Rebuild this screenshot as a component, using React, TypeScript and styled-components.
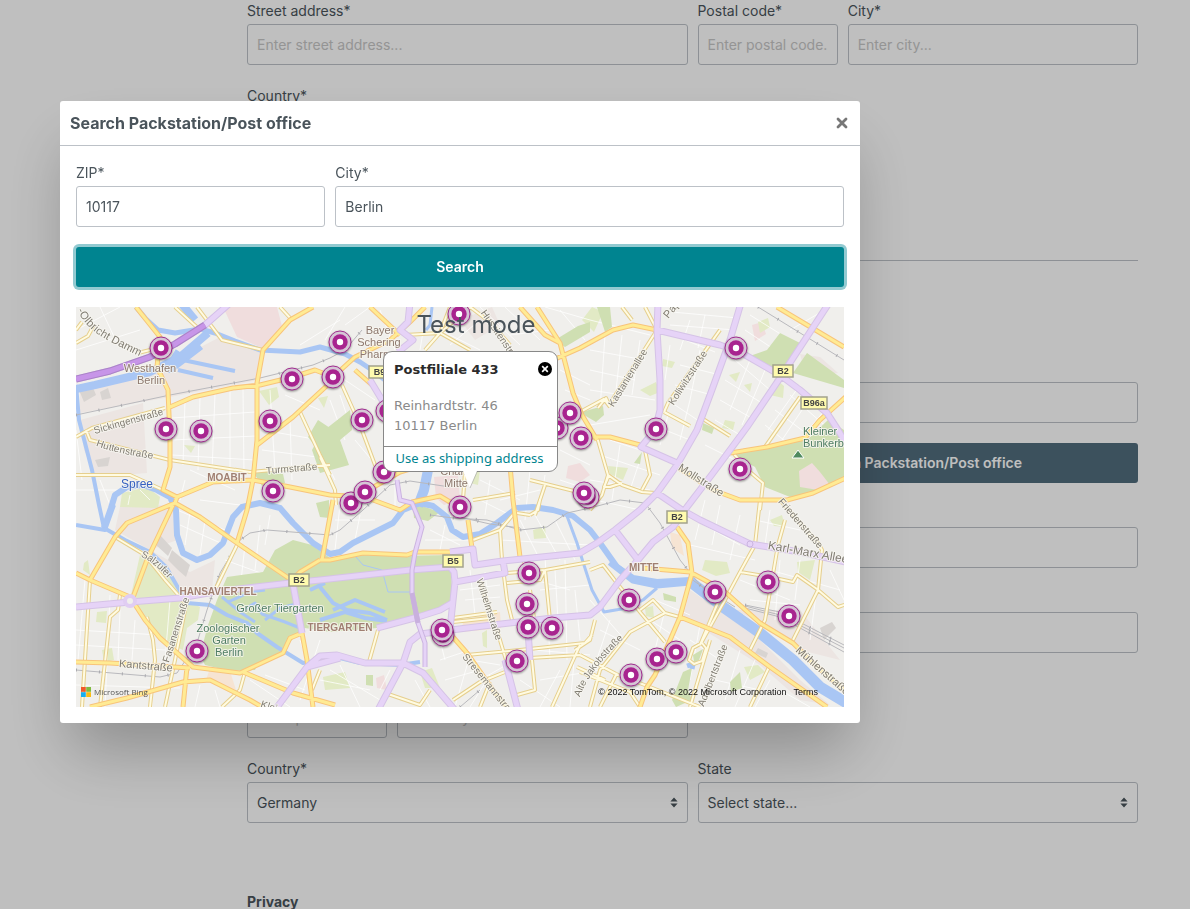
import React, { useId } from "react";
import styled, { createGlobalStyle, css } from "styled-components";

const GlobalStyle = createGlobalStyle`
  *, *::before, *::after { box-sizing: border-box; }
  body {
    margin: 0;
    height: 100vh;
    overflow: hidden;
    background: #fff;
    color: #4a545b;
    font: 14px/21px Inter, "Liberation Sans", sans-serif;
  }
`;

/* ---------- form parts ---------- */

const Page = styled.main`
  padding: 0 52px 0 247px;
`;

const Row = styled.div`
  display: grid;
  grid-template-columns: repeat(12, 1fr);
  gap: 10px;
  margin-bottom: 20px;
`;

const FieldBox = styled.div<{ $span: number }>`
  grid-column: span ${(p) => p.$span};
  display: flex;
  flex-direction: column;
  justify-content: flex-end;
  gap: 3px;
  min-width: 0;
  min-height: 65px;
`;

const Label = styled.label`
  line-height: 21px;
`;

const control = css`
  width: 100%;
  height: 41px;
  padding: 0 9px;
  border: 1px solid #bcc1c7;
  border-radius: 3px;
  background: #fff;
  color: #4a545b;
  font: inherit;
  outline: none;
`;

const Input = styled.input`
  ${control}
  &::placeholder { color: #c6c6c6; opacity: 1; }
`;

const SelectWrap = styled.div`
  position: relative;
`;

const Select = styled.select`
  ${control}
  display: block;
  appearance: none;
`;

const Caret = styled.svg`
  position: absolute;
  right: 10px;
  top: 15px;
  pointer-events: none;
`;

const SectionTitle = styled.h2`
  margin: 68px 0 12px;
  padding-bottom: 21px;
  border-bottom: 1px solid #bcc1c7;
  font-size: 14px;
  line-height: 21px;
  font-weight: 700;
`;

const Divider = styled.hr`
  margin: 110px 0 12px;
  border: 0;
  border-top: 1px solid #bcc1c7;
`;

const Button = styled.button<{ $tone: string; $focused?: boolean }>`
  display: block;
  width: 100%;
  height: 40px;
  padding: 0 0 2px;
  border: 0;
  border-radius: 3px;
  background: ${(p) => p.$tone};
  color: #fff;
  font: inherit;
  font-weight: 600;
  box-shadow: ${(p) => (p.$focused ? "0 0 0 3px rgba(38, 150, 163, 0.5)" : "none")};
`;

const HalfColumn = styled.div`
  grid-column: 7 / span 6;
`;

type FieldProps = { label: string; span: number; placeholder?: string; value?: string; bare?: boolean };

function Field({ label, span, placeholder, value, bare }: FieldProps) {
  const id = useId();
  return (
    <FieldBox $span={span}>
      {!bare && <Label htmlFor={id}>{label}</Label>}
      <Input id={id} aria-label={bare ? label : undefined} placeholder={placeholder} defaultValue={value} />
    </FieldBox>
  );
}

function SelectField({ label, span, value }: { label: string; span: number; value: string }) {
  const id = useId();
  return (
    <FieldBox $span={span}>
      <Label htmlFor={id}>{label}</Label>
      <SelectWrap>
        <Select id={id} defaultValue={value}>
          <option>{value}</option>
        </Select>
        <Caret width="8" height="11" viewBox="0 0 8 11" aria-hidden="true">
          <path d="M4 0.5 L7.6 4.5 H0.4 Z M4 10.5 L0.4 6.5 H7.6 Z" fill="#4a545b" />
        </Caret>
      </SelectWrap>
    </FieldBox>
  );
}

/* ---------- dialog parts ---------- */

const Backdrop = styled.div`
  position: fixed;
  inset: 0;
  padding: 101px 60px 0;
  background: rgba(0, 0, 0, 0.25);
`;

const Dialog = styled.section`
  max-width: 800px;
  border-radius: 3px;
  background: #fff;
  box-shadow: 0 36px 60px -10px rgba(0, 0, 0, 0.27);
`;

const DialogHeader = styled.header`
  display: flex;
  align-items: center;
  justify-content: space-between;
  height: 45px;
  padding: 0 10px;
  border-bottom: 1px solid #bcc1c7;
`;

const DialogTitle = styled.h1`
  margin: 0;
  font-size: 16px;
  line-height: 24px;
  font-weight: 700;
`;

const CloseButton = styled.button`
  display: flex;
  padding: 2px;
  border: 0;
  background: none;
  color: #777;
`;

const DialogBody = styled.div`
  padding: 16px;
`;

/* ---------- map parts ---------- */

const MapFrame = styled.div`
  position: relative;
  height: 400px;
  margin-top: 20px;
  overflow: hidden;
  background: #f0efec;
`;

const MapDrawing = styled.svg`
  display: block;
  width: 768px;
  height: 400px;
`;

const Pin = styled.button`
  position: absolute;
  width: 24px;
  height: 24px;
  margin: -12px 0 0 -12px;
  padding: 0;
  border: 0;
  background: none;
  filter: drop-shadow(0 1px 1px rgba(0, 0, 0, 0.45));
  svg { display: block; }
`;

const ModeNotice = styled.div`
  position: absolute;
  top: 0;
  left: 32px;
  right: 0;
  text-align: center;
  font-size: 24px;
  line-height: 36px;
`;

const Callout = styled.div`
  position: absolute;
  left: 307px;
  top: 44px;
  width: 175px;
  border: 1px solid #888;
  border-radius: 9px;
  background: #fff;
  font-family: "DejaVu Sans", sans-serif;
  font-size: 13px;
  line-height: 20px;
  color: #8a8a8a;
`;

const CalloutHead = styled.div`
  display: flex;
  align-items: flex-start;
  justify-content: space-between;
  padding: 8px 5px 16px 10px;
`;

const CalloutTitle = styled.strong`
  font-size: 13px;
  line-height: 20px;
  color: #2b2b2b;
`;

const CalloutClose = styled.button`
  display: flex;
  padding: 2px 0;
  border: 0;
  background: none;
`;

const Address = styled.address`
  padding: 0 10px 10px;
  font-style: normal;
`;

const CalloutAction = styled.a`
  display: block;
  border-top: 1px solid #888;
  padding: 1px 2px 3px 0;
  text-align: center;
  font-family: "Noto Sans", sans-serif;
  color: #008490;
  text-decoration: none;
`;

const Tail = styled.svg`
  position: absolute;
  left: 78px;
  top: 119px;
`;

const MapFooter = styled.div`
  position: absolute;
  left: 5px;
  right: 26px;
  bottom: 9px;
  display: flex;
  align-items: center;
  font: 9px/12px "Liberation Sans", sans-serif;
  color: #111;
`;

const Brand = styled.span`
  display: flex;
  align-items: center;
  gap: 3px;
  margin-right: auto;
  font: 8px/12px "Open Sans", sans-serif;
  color: #555;
`;

const Terms = styled.a`
  margin-left: 7px;
  color: inherit;
  text-decoration: none;
`;

/* Map drawing uses one coordinate space; its top left corner is the origin below. */
const ORIGIN = { x: 76, y: 307 };

const pins: [number, number][] = [
  [161, 348], [340, 342], [459, 314], [292, 379], [333, 377], [166, 429], [201, 431],
  [270, 421], [362, 420], [387, 411], [384, 472], [351, 503], [365, 492], [273, 491],
  [460, 507], [197, 651], [736, 348], [656, 429], [740, 469], [557, 428], [570, 413],
  [581, 438], [588, 497], [584, 493], [529, 573], [527, 604], [528, 627], [552, 628],
  [517, 661], [443, 635], [442, 630], [629, 600], [715, 592], [768, 582], [789, 616],
  [631, 675], [657, 659], [676, 652],
];

const parks = [
  "227,577 263,572 275,550 293,540 312,545 330,558 363,555 400,556 450,555 453,605 420,615 377,628 330,632 305,628 292,640 280,653 258,663 255,670 230,671 205,665 200,655 208,625 217,600",
  "322,432 350,410 352,430 340,440 349,465 320,473 312,450",
  "308,437 318,420 330,428 330,470 318,450",
  "252,470 283,474 285,483 262,486",
  "730,453 807,440 828,420 844,430 844,480 820,490 790,497 765,487 755,467",
  "747,357 767,350 780,333 800,343 780,377 763,365",
  "793,373 807,353 844,380 844,388",
  "597,307 610,307 612,327 605,332",
  "555,340 578,326 590,322 590,332 565,347",
  "582,412 603,406 604,415 596,422 584,415",
  "413,505 425,507 440,512 428,521 414,518",
  "740,672 742,688 731,692 730,682",
  "683,672 692,668 688,690 692,700 676,707 672,700",
  "663,593 676,597 676,602 664,600",
  "383,448 397,437 410,450 396,458",
  "703,423 714,428 712,434 702,430",
  "366,675 373,675 373,686 366,685",
  "316,503 329,500 329,518 320,517",
  "642,452 640,464 634,463",
  "693,655 703,649 699,660 694,663",
];

const lightParks = [
  "140,555 165,568 186,600 200,607 198,620 187,628 183,650 160,640 138,610 131,595",
  "122,493 147,487 160,497 158,508 120,507",
  "259,391 277,387 279,397 269,405",
  "184,445 195,446 191,453",
  "640,390 656,382 660,392 650,396",
  "663,359 675,362 672,368 662,366",
  "729,375 740,372 736,382",
  "744,385 752,383 750,392",
  "775,378 784,386 783,398 770,395",
  "782,467 794,462 797,474 783,475",
  "608,466 628,468 623,480 610,474",
  "705,560 727,562 730,573 716,576 702,570",
  "797,562 815,560 810,580 798,572",
  "770,520 782,515 785,527 774,526",
  "582,320 592,307 603,312 594,332",
  "533,530 545,526 546,538 534,539",
  "482,633 487,630 487,648 483,646",
  "323,677 345,672 350,688 325,690",
  "420,672 432,668 440,688 425,688",
  "318,398 328,396 324,408",
  "758,322 768,318 770,327 760,333",
  "84,563 88,560 90,575 83,570",
  "97,612 107,611 106,623 96,622",
  "470,467 480,470 478,485 466,482",
  "540,438 556,440 552,455 540,450",
  "744,667 758,665 765,672 750,680",
  "102,650 112,648 114,660 104,662",
  "725,420 735,422 733,430 722,428",
  "645,608 653,606 654,618 646,616",
];

const built = [
  { fill: "#ece5e2", points: "80,387 170,363 220,337 262,350 258,380 170,397 80,413" },
  { fill: "#ece5e2", points: "80,420 143,403 147,473 97,477 84,450" },
  { fill: "#ece5e2", points: "120,507 172,505 177,540 150,550 190,572 215,560 212,590 190,598 150,550 115,530" },
  { fill: "#ece5e2", points: "690,590 715,607 760,640 800,680 830,705 800,700 760,665 720,640 683,617" },
  { fill: "#ece5e2", points: "735,610 800,610 840,660 800,650 770,628" },
  { fill: "#f0dddd", points: "223,307 277,307 283,330 262,348 237,337" },
  { fill: "#f0dddd", points: "799,471 812,463 820,472 830,485 818,490 800,487" },
  { fill: "#f0dddd", points: "434,477 458,475 460,500 444,505 436,498" },
  { fill: "#f0dddd", points: "752,325 762,322 766,334 755,341" },
  { fill: "#f0dddd", points: "568,466 580,463 590,475 580,482 566,478" },
  { fill: "#f0dddd", points: "376,678 384,675 387,690 377,688" },
  { fill: "#f6e4d3", points: "463,620 500,612 501,628 462,632" },
  { fill: "#f6e4d3", points: "210,668 230,671 236,690 206,680" },
  { fill: "#f6e4d3", points: "670,532 680,535 684,556 672,548" },
  { fill: "#ece5e2", points: "800,354 820,357 838,373 820,375 803,365" },
  { fill: "#ece5e2", points: "460,320 492,307 500,325 475,340" },
  { fill: "#d8d4d1", points: "79,390 92,385 96,395 84,402" },
  { fill: "#d8d4d1", points: "100,392 108,388 111,398 102,400" },
  { fill: "#d8d4d1", points: "95,460 110,457 108,466 98,467" },
  { fill: "#d8d4d1", points: "160,535 172,548 168,556 156,545" },
  { fill: "#d8d4d1", points: "172,550 190,565 186,577 178,570 168,560" },
  { fill: "#d8d4d1", points: "758,648 768,653 766,658 755,653" },
  { fill: "#d8d4d1", points: "820,628 832,622 836,628 824,640" },
];

const water: { d: string; w: number }[] = [
  { d: "M136 307 146 319 158 330 175 333 200 329 215 333 235 341 260 350 300 352 320 347 345 354 360 362 375 372 395 388", w: 5 },
  { d: "M76 389 95 385 150 372 180 357 208 333", w: 8 },
  { d: "M180 352 170 368 200 345", w: 10 },
  { d: "M183 360 235 371 M178 370 213 378", w: 4 },
  { d: "M181 303 195 320", w: 8 },
  { d: "M76 385 79 420 92 470 99 505 104 528 M76 525 105 530 114 505", w: 4 },
  { d: "M104 528 111 508 115 495 127 487 143 485 157 490 170 497 176 510 177 535 183 553 197 560 210 555 223 543 233 517 242 507 260 503 280 508 293 523 313 543 330 554 340 552 353 543 373 533 393 523 403 510 420 503 433 506 447 517 452 530 463 537 480 534 497 523 517 508 533 507 553 510 573 516 590 530 600 543 617 567 633 578 657 582 690 580 705 592", w: 6 },
  { d: "M104 528 125 540 150 552 166 567 187 603 210 605 227 615 247 623 257 633 277 647 303 663 340 658 360 663 400 665 420 662", w: 4 },
  { d: "M428 470 424 490 418 506", w: 10 },
  { d: "M432 307 430 325 426 330", w: 3 },
  { d: "M610 562 633 580 657 585 690 582", w: 7 },
  { d: "M688 580 723 607 760 633 793 660 820 687 850 705", w: 11 },
  { d: "M567 516 577 543 583 562 592 590 604 612 627 608 643 600 657 588", w: 3 },
  { d: "M222 597 240 612 255 603 262 614 285 622 300 628 M228 602 250 592 265 590 M240 612 255 622 M265 620 280 608 296 604", w: 3 },
  { d: "M320 587 333 603 347 610 370 613 387 620 M333 610 355 600 385 612 M320 620 345 612 365 618 387 621 M310 590 325 583", w: 4 },
  { d: "M356 557 363 565 382 570 388 592 412 592", w: 1 },
  { d: "M687 666 693 664 692 669", w: 5 },
  { d: "M385 458 397 450", w: 2 },
];

const localStreets = [
  "M76 330 120 307 M100 307 118 345 M76 350 140 330 M345 307 325 340 M300 345 340 320",
  "M185 400 183 465 M200 397 198 470 M215 394 212 472 M230 391 230 475 M243 388 244 476 M172 418 255 412 M172 440 256 436 M172 455 255 460",
  "M270 390 275 470 M290 420 292 480 M262 430 320 440 M262 450 325 458 M300 410 335 480 M285 395 320 410",
  "M590 320 650 335 M590 350 645 360 M590 370 635 380 M605 335 600 410 M622 335 615 400 M640 340 632 395 M590 390 655 400 M590 425 650 415",
  "M670 345 665 380 M685 340 715 352 M680 365 720 375 M675 385 712 395 M700 350 690 400 M675 405 705 425 M690 400 680 440 M665 430 690 440 M668 415 660 445",
  "M725 380 765 405 M720 400 755 420 M735 360 770 390 M715 420 740 435 M705 445 735 460 M750 360 730 410 M765 370 742 425",
  "M790 395 830 430 M775 410 815 440 M765 425 790 445 M800 385 768 430 M812 395 782 440 M825 410 798 442 M800 320 844 345 M790 330 830 307",
  "M690 320 680 350 M705 315 698 348 M670 325 735 330 M672 312 738 318 M750 315 790 340 M745 330 775 350",
  "M610 440 655 455 M600 455 660 475 M620 445 612 500 M640 460 630 490 M590 480 650 490 M595 500 640 510",
  "M695 520 740 545 M705 500 695 540 M720 505 712 545 M690 545 755 560 M740 515 730 560 M770 510 765 545 M755 520 800 530",
  "M780 560 775 620 M740 580 790 600 M800 560 795 600 M820 565 810 640 M750 600 800 605 M770 570 840 590 M830 570 844 600",
  "M590 600 625 640 M600 630 640 650 M610 620 590 680 M590 660 640 690 M655 600 690 615 M650 620 680 640 M665 610 655 650",
  "M690 640 720 660 M700 625 690 680 M740 650 725 700 M755 660 735 707 M715 680 760 690 M770 680 755 707 M780 690 810 707",
  "M460 580 500 575 M460 590 500 585 M470 570 475 615 M485 572 490 620 M465 600 500 597 M535 580 570 590 M555 570 558 620 M540 590 590 585",
  "M545 555 550 660 M565 560 567 660 M575 590 580 640 M535 650 590 655 M540 680 600 670 M470 660 500 665 M480 680 515 660 M575 650 570 707",
  "M440 660 470 650 M445 680 480 670 M470 655 455 707 M490 675 470 707 M520 680 560 707 M560 670 540 707 M330 670 380 700 M340 665 360 707",
  "M320 680 370 690 M390 670 380 690 M415 680 430 707 M440 640 445 660 M520 520 540 560 M535 515 560 560 M555 520 575 560 M500 540 590 545",
  "M85 580 78 660 M110 595 105 707 M76 630 160 635 M76 645 165 650 M135 620 132 660 M155 645 152 707 M76 685 180 688 M120 610 118 660",
  "M170 600 165 660 M215 690 220 707 M200 685 195 707 M250 680 290 707 M265 675 305 690 M300 640 310 670 M320 640 300 700",
  "M177 510 225 530 M190 512 185 545 M205 520 200 555 M180 525 225 545 M245 545 240 590 M260 525 255 570 M225 560 280 580 M270 515 265 545",
  "M76 430 82 480 M100 480 110 505 M76 490 120 490 M130 495 128 505 M140 490 150 500 M185 480 180 500 M190 470 235 490 M200 500 240 505",
  "M345 380 375 400 M340 395 350 425 M330 400 345 440 M355 440 380 470 M395 480 395 510 M335 520 375 520 M340 505 335 550 M360 515 355 540",
  "M560 310 585 340 M545 307 590 320 M560 370 590 385 M565 390 590 400 M560 450 590 465 M480 480 520 500 M530 470 525 520 M545 475 540 510",
  "M560 480 590 490 M490 480 485 515 M500 500 540 490 M480 500 510 515 M430 530 460 545 M425 540 470 540 M445 525 440 550",
  "M380 310 395 350 M345 325 370 307 M425 320 420 350 M440 330 480 350 M450 345 480 320 M480 307 520 345 M505 307 540 340 M510 335 550 330",
];

const minorRoads = [
  "M76 343 88 336 94 325", "M138 353 150 350", "M197 307 222 340 263 350", "M280 307 292 320",
  "M76 437 92 428 165 408", "M86 430 90 440 170 460 250 472 330 465", "M76 475 130 475 163 490",
  "M300 412 320 455 330 475", "M90 580 82 707", "M120 595 118 610 110 617 100 707", "M147 617 153 640 155 660 150 707",
  "M187 600 175 660 165 707", "M76 330 82 322", "M115 537 145 555 165 580 187 605", "M237 545 215 590",
  "M440 333 425 350", "M405 335 440 333 470 307", "M440 333 470 350", "M470 307 490 322 510 345", "M440 333 450 307",
  "M342 385 360 425 375 465 385 480", "M320 457 335 490 336 505", "M645 307 657 330", "M598 408 606 398 609 405 657 330",
  "M580 412 604 399 610 407", "M664 412 668 403 720 330", "M664 412 690 426", "M703 419 730 436",
  "M765 447 800 397", "M597 437 608 475 622 485 642 492 655 493", "M608 475 602 495 590 510", "M645 450 650 475 642 490",
  "M609 475 604 487 610 487 622 483", "M733 453 750 472 763 483 760 510", "M760 500 755 545 740 572 725 600 700 645",
  "M780 500 818 543 822 550 818 590 793 640", "M785 520 778 545 772 580 765 620 750 650", "M740 572 770 577 793 582 797 575 817 589 838 607 850 603",
  "M590 570 603 565 620 587 640 612 665 642", "M640 610 653 600 665 613 683 618", "M665 613 630 632 600 670 590 707",
  "M580 655 618 675 650 687 700 707", "M580 672 630 692 640 707", "M617 673 600 707", "M595 620 590 640 575 650",
  "M473 540 500 530 517 510", "M500 530 502 560 507 600 512 620", "M478 575 500 640 506 660", "M507 573 545 570 590 562",
  "M507 583 540 580 545 570", "M545 570 550 620", "M530 590 535 625", "M467 655 520 650 585 643 592 635",
  "M530 658 580 655", "M453 618 497 612", "M453 622 490 618", "M532 660 535 690 517 695", "M580 645 552 707",
  "M453 700 480 682 505 672", "M490 682 480 707", "M378 630 369 662", "M388 694 420 705 430 690",
  "M523 560 530 575", "M530 515 538 510 540 500", "M530 515 517 513", "M465 472 463 500", "M473 500 515 493",
  "M530 480 590 495", "M545 485 535 515", "M245 672 240 690 222 707", "M320 670 312 690", "M577 667 605 680",
  "M175 307 200 330", "M770 665 750 707", "M693 648 702 643 706 648 702 661 694 664 689 660 Z",
  "M719 600 700 645", "M710 640 690 707", "M622 307 632 320",
];

const mainRoads = [
  "M136 307 160 337 157 367 168 390 170 440 170 467 163 490 177 497",
  "M313 307 290 320 263 350 257 383 257 440 253 480 247 510 237 543",
  "M170 407 193 397 233 388 260 385 293 377 315 370 333 377", "M333 377 355 357 390 340 410 322 425 307",
  "M257 445 293 417 333 380", "M253 480 213 482 177 497 175 503 127 523 115 537 90 580", "M175 503 200 517 237 543 287 577 300 585",
  "M173 505 147 560 132 600", "M253 480 290 487 330 495 365 497 400 510 412 502 440 496 455 505",
  "M76 573 90 580 130 597 145 620 160 638 193 667 240 673 283 653 290 638 302 633",
  "M320 560 300 572 290 582", "M243 672 293 693 335 705", "M76 662 110 663 190 668",
  "M90 707 127 698 183 682 210 680 250 700 262 707", "M187 667 183 707", "M302 633 307 660 313 707",
  "M320 560 330 560 363 553 407 555 415 552 450 552", "M322 560 333 500", "M365 492 400 472 440 460", "M468 520 472 548",
  "M510 465 513 500 520 557", "M453 637 467 653 493 690 507 707", "M537 307 560 343 573 393 582 415 597 440",
  "M520 307 545 335 560 343", "M582 437 610 437 640 445", "M553 360 580 348 613 330 633 325 657 330",
  "M777 307 844 347", "M730 453 767 447 805 438 820 420 850 393", "M677 467 713 490 740 500 787 500 813 493 850 476",
  "M677 527 688 543 692 573 680 617 655 675 647 687 640 707", "M643 568 690 572 723 590 760 623 793 643 813 663 850 695",
  "M680 617 730 637 770 667 827 707", "M370 307 400 335", "M355 370 372 385",
];

const trunkRoads = [
  "M76 607 130 602 180 598 220 591 290 583 320 580 410 570 450 567 454 572 455 582 452 610 450 630",
  "M455 582 505 573 503 561", "M450 552 473 549 475 565 503 561 580 553 597 543 615 530 640 510 657 493 677 465 697 430 713 387 730 340 741 303",
  "M658 303 657 330 660 380 660 410 655 430 641 447 677 463", "M657 330 720 345 740 352 780 375 800 390 827 413 838 430 850 450",
  "M829 303 780 378 747 427 713 473 687 507 673 527 653 542 638 560 620 580 600 607 590 615 553 618 467 628 420 634 410 642 403 663 378 710",
  "M657 493 682 510 700 520 750 544 800 552 850 563", "M615 530 638 560", "M452 603 440 610 418 617 377 628",
  "M293 584 302 633", "M275 710 307 667 320 656 337 655 365 663 403 663 423 673 455 710", "M307 667 340 658",
  "M528 630 530 660", "M505 660 518 710", "M410 303 408 322 400 330 413 340 398 352", "M370 380 385 405 400 440",
];

const tunnels = ["M397 480 400 500 412 503 422 527 415 553 412 570 412 593 418 623 425 643 425 667"];

const rails = [
  "M76 415 170 395 260 378 313 365 330 358 345 350 362 330",
  "M76 670 160 677 177 673 197 643 207 610 220 573 240 540 250 533 267 530 330 535 340 530 363 510 390 485 410 481 450 487",
  "M430 515 453 518 487 520 520 530 547 527 567 513 590 508 620 500 645 503 660 523 680 560 700 585 735 607",
  "M455 516 490 524 520 528", "M758 307 844 360", "M745 605 780 612 844 645", "M745 608 780 617 844 652", "M745 606 780 615 844 648", "M690 578 720 600",
  "M460 707 480 690",
];

type Place = { t: string; x: number; y: number; c?: string; bold?: boolean; s?: number; start?: boolean };
const BROWN = "#8d786e";
const GREEN = "#4f7d63";
const places: Place[] = [
  { t: "Westhafen", x: 150, y: 372, c: BROWN }, { t: "Berlin", x: 151, y: 384, c: BROWN },
  { t: "Bayer", x: 380, y: 334, c: BROWN }, { t: "Schering", x: 379, y: 346, c: BROWN }, { t: "Pharma", x: 379, y: 358, c: BROWN },
  { t: "Charité", x: 458, y: 475, c: BROWN }, { t: "Mitte", x: 456, y: 487, c: BROWN },
  { t: "MOABIT", x: 227, y: 481, c: "#a07f72", bold: true, s: 10 }, { t: "MITTE", x: 644, y: 571, c: "#a07f72", bold: true, s: 10 },
  { t: "HANSAVIERTEL", x: 218, y: 595, c: "#a07f72", bold: true, s: 10 }, { t: "TIERGARTEN", x: 340, y: 631, c: "#a07f72", bold: true, s: 10 },
  { t: "Spree", x: 137, y: 488, c: "#3560c0", s: 12 },
  { t: "Großer Tiergarten", x: 280, y: 612, c: GREEN }, { t: "Zoologischer", x: 228, y: 632, c: GREEN },
  { t: "Garten", x: 229, y: 644, c: GREEN }, { t: "Berlin", x: 229, y: 656, c: GREEN },
  { t: "Kleiner", x: 803, y: 435, c: GREEN, start: true }, { t: "Bunkerberg", x: 803, y: 447, c: GREEN, start: true },
];

const streetNames: { t: string; d: string; s?: number }[] = [
  { t: "-Olbricht Damm", d: "M80 309 Q88 326 108 337 T160 362", s: 11 },
  { t: "Sickingenstraße", d: "M94 431 L180 407" },
  { t: "Huttenstraße", d: "M97 443 Q120 452 175 459" },
  { t: "Turmstraße", d: "M266 471 L340 465" },
  { t: "Hussitenstraße", d: "M483 311 L530 380" },
  { t: "Kastanienallee", d: "M611 406 L658 329" },
  { t: "Pappelallee", d: "M666 317 L700 275", s: 11 },
  { t: "Kollwitzstraße", d: "M671 404 L719 330" },
  { t: "Mollstraße", d: "M679 467 L760 518", s: 11 },
  { t: "Friedenstraße", d: "M780 500 L840 569" },
  { t: "Karl-Marx Allee", d: "M768 546 L880 566", s: 12 },
  { t: "Salzufer", d: "M142 554 Q158 560 180 588" },
  { t: "Fasanenstraße", d: "M166 662 L189 590" },
  { t: "Kantstraße", d: "M119 664 L200 671", s: 11 },
  { t: "Wilhelmstraße", d: "M479 579 L507 665" },
  { t: "Stresemannstraße", d: "M464 655 L532 738" },
  { t: "Alte Jakobstraße", d: "M577 696 Q588 665 635 624" },
  { t: "Adalbertstraße", d: "M701 706 L733 625" },
  { t: "Mühlenstraße", d: "M797 649 L867 710", s: 11 },
  { t: "Kleiststraße", d: "M261 704 L310 720" },
];

const shields: [string, number, number][] = [
  ["B2", 783, 371], ["B96a", 814, 403], ["B2", 677, 517], ["B5", 453, 561], ["B2", 299, 580], ["B96", 382, 372],
];

function Roads({ lines, width, fill, edge, edgeWidth = 1 }: { lines: string[]; width: number; fill: string; edge: string; edgeWidth?: number }) {
  const d = lines.join(" ");
  return (
    <g fill="none" strokeLinejoin="round">
      <path d={d} stroke={edge} strokeWidth={width + edgeWidth * 2} />
      <path d={d} stroke={fill} strokeWidth={width} />
    </g>
  );
}

function CityMap() {
  return (
    <MapDrawing viewBox={`${ORIGIN.x} ${ORIGIN.y} 768 400`} role="img" aria-label="Map of Berlin">
      {built.map((b) => <polygon key={b.points} points={b.points} fill={b.fill} />)}
      {lightParks.map((p) => <polygon key={p} points={p} fill="#e2eac5" />)}
      <path d={localStreets.join(" ")} stroke="#fff" strokeOpacity="0.75" fill="none" />
      {parks.map((p) => <polygon key={p} points={p} fill="#cfdfb2" />)}
      <polygon points="799,471 812,463 820,472 830,485 818,490 800,487" fill="#f0dddd" />
      <g fill="none" stroke="#a9c6f4" strokeLinejoin="round">
        {water.map((w) => <path key={w.d} d={w.d} strokeWidth={w.w} />)}
      </g>
      <path d={rails.join(" ")} fill="none" stroke="#b9b9bd" />
      <path d={rails.join(" ")} fill="none" stroke="#a9a9ae" strokeWidth="3" strokeDasharray="1 22" />
      <Roads lines={minorRoads} width={2} fill="#fffbe2" edge="#e6cf8e" />
      <Roads lines={mainRoads} width={3} fill="#ffeb94" edge="#f8c47a" />
      <Roads lines={["M76 379 110 371 150 357 175 344 205 325 230 303"]} width={5} fill="#e6d3f7" edge="#d3bfe8" />
      <Roads lines={["M76 379 110 371 150 357 175 344 205 325"]} width={5} fill="#c795e8" edge="#ab83c8" />
      <Roads lines={trunkRoads} width={5} fill="#e6d3f7" edge="#d5c3e6" />
      <Roads lines={tunnels} width={3} fill="#e6d3f7" edge="#cbb4e0" />
      <path d="M412 593 418 623" stroke="#c9b0de" strokeWidth="5" />
      <circle cx="130" cy="601" r="5" fill="#f0efec" stroke="#e0cdf2" strokeWidth="4" />
      <circle cx="750" cy="544" r="3" fill="#e6d3f7" stroke="#cbb4e0" />
      <g fontFamily="Liberation Sans, sans-serif" paintOrder="stroke" stroke="#f7f6f0" strokeOpacity="0.85" strokeWidth="2" strokeLinejoin="round">
        {streetNames.map((s, i) => (
          <g key={s.t}>
            <path id={`street-${i}`} d={s.d} fill="none" stroke="none" />
            <text fontSize={s.s ?? 10} fill="#807c72" dy="3">
              <textPath href={`#street-${i}`}>{s.t}</textPath>
            </text>
          </g>
        ))}
        {places.map((p) => (
          <text key={p.t + p.y} x={p.x} y={p.y} fontSize={p.s ?? 11} fontWeight={p.bold ? 700 : 400} fill={p.c} textAnchor={p.start ? "start" : "middle"}>
            {p.t}
          </text>
        ))}
      </g>
      {shields.map(([t, x, y]) => {
        const w = t.length > 2 ? 26 : 20;
        return (
          <g key={t + x}>
            <rect x={x - w / 2} y={y - 6} width={w} height="12" fill="#fffbae" stroke="#a3a38c" strokeWidth="1.5" />
            <text x={x} y={y + 3} fontFamily="Liberation Sans, sans-serif" fontSize="9" fontWeight="700" fill="#444" textAnchor="middle">{t}</text>
          </g>
        );
      })}
      <path d="M798 450 804 458 H792 Z" fill="#4f8a5f" stroke="#fff" />
    </MapDrawing>
  );
}

function BranchMap() {
  return (
    <MapFrame>
      <CityMap />
      {pins.map(([x, y]) => (
        <Pin key={`${x}-${y}`} aria-label="Branch" style={{ left: x - ORIGIN.x, top: y - ORIGIN.y }}>
          <svg width="24" height="24" viewBox="0 0 24 24">
            <circle cx="12" cy="12" r="11" fill="#d6c6d6" stroke="#a02c8f" />
            <circle cx="12" cy="12" r="7.7" fill="#a8248f" />
            <circle cx="12" cy="12" r="3.2" fill="#fff" />
          </svg>
        </Pin>
      ))}
      <ModeNotice>Test mode</ModeNotice>
      <Callout>
        <CalloutHead>
          <CalloutTitle>Postfiliale 433</CalloutTitle>
          <CalloutClose aria-label="Close details">
            <svg width="14" height="14" viewBox="0 0 14 14">
              <circle cx="7" cy="7" r="7" fill="#000" />
              <path d="M4.2 4.2 9.8 9.8 M9.8 4.2 4.2 9.8" stroke="#fff" strokeWidth="1.7" />
            </svg>
          </CalloutClose>
        </CalloutHead>
        <Address>
          Reinhardtstr. 46
          <br />
          10117 Berlin
        </Address>
        <CalloutAction href="#use">Use as shipping address</CalloutAction>
        <Tail width="16" height="18" viewBox="0 0 16 18" aria-hidden="true">
          <path d="M1 0 H15 L8 17 Z" fill="#fff" />
          <path d="M15 1 L8 17" stroke="#aaa" strokeWidth="0.7" />
        </Tail>
      </Callout>
      <MapFooter>
        <Brand>
          <svg width="10" height="10" viewBox="0 0 10 10" aria-hidden="true">
            <path d="M0 0h4.8v4.8H0z" fill="#f1592a" />
            <path d="M5.2 0H10v4.8H5.2z" fill="#80bb41" />
            <path d="M0 5.2h4.8V10H0z" fill="#19aef0" />
            <path d="M5.2 5.2H10V10H5.2z" fill="#fbbc13" />
          </svg>
          Microsoft Bing
        </Brand>
        <span>© 2022 TomTom, © 2022 Microsoft Corporation</span>
        <Terms href="#terms">Terms</Terms>
      </MapFooter>
    </MapFrame>
  );
}

export default function App() {
  return (
    <>
      <GlobalStyle />
      <Page>
        <Row>
          <Field label="Street address*" span={6} placeholder="Enter street address..." />
          <Field label="Postal code*" span={2} placeholder="Enter postal code..." />
          <Field label="City*" span={4} placeholder="Enter city..." />
        </Row>
        <Row>
          <SelectField label="Country*" span={6} value="Germany" />
        </Row>
        <Divider />
        <Row>
          <Field label="Title" span={3} bare />
        </Row>
        <Row>
          <Field label="First name" span={6} bare />
          <Field label="Last name" span={6} bare />
        </Row>
        <Row>
          <HalfColumn>
            <Button type="button" $tone="#516c7d">Search Packstation/Post office</Button>
          </HalfColumn>
        </Row>
        <Row>
          <Field label="Company" span={6} bare />
          <Field label="Department" span={6} bare />
        </Row>
        <Row>
          <Field label="Street address" span={6} bare />
          <Field label="Additional address" span={6} bare />
        </Row>
        <Row>
          <Field label="Postal code" span={2} placeholder="Enter postal code..." bare />
          <Field label="City" span={4} placeholder="Enter city..." bare />
        </Row>
        <Row>
          <SelectField label="Country*" span={6} value="Germany" />
          <SelectField label="State" span={6} value="Select state..." />
        </Row>
        <SectionTitle>Privacy</SectionTitle>
      </Page>
      <Backdrop>
        <Dialog role="dialog" aria-modal="true" aria-labelledby="dialog-title">
          <DialogHeader>
            <DialogTitle id="dialog-title">Search Packstation/Post office</DialogTitle>
            <CloseButton aria-label="Close">
              <svg width="12" height="12" viewBox="0 0 12 12">
                <path d="M2 2 10 10 M10 2 2 10" stroke="currentColor" strokeWidth="2.8" strokeLinecap="round" />
              </svg>
            </CloseButton>
          </DialogHeader>
          <DialogBody>
            <Row>
              <Field label="ZIP*" span={4} value="10117" />
              <Field label="City*" span={8} value="Berlin" />
            </Row>
            <Button type="button" $tone="#008490" $focused>Search</Button>
            <BranchMap />
          </DialogBody>
        </Dialog>
      </Backdrop>
    </>
  );
}
